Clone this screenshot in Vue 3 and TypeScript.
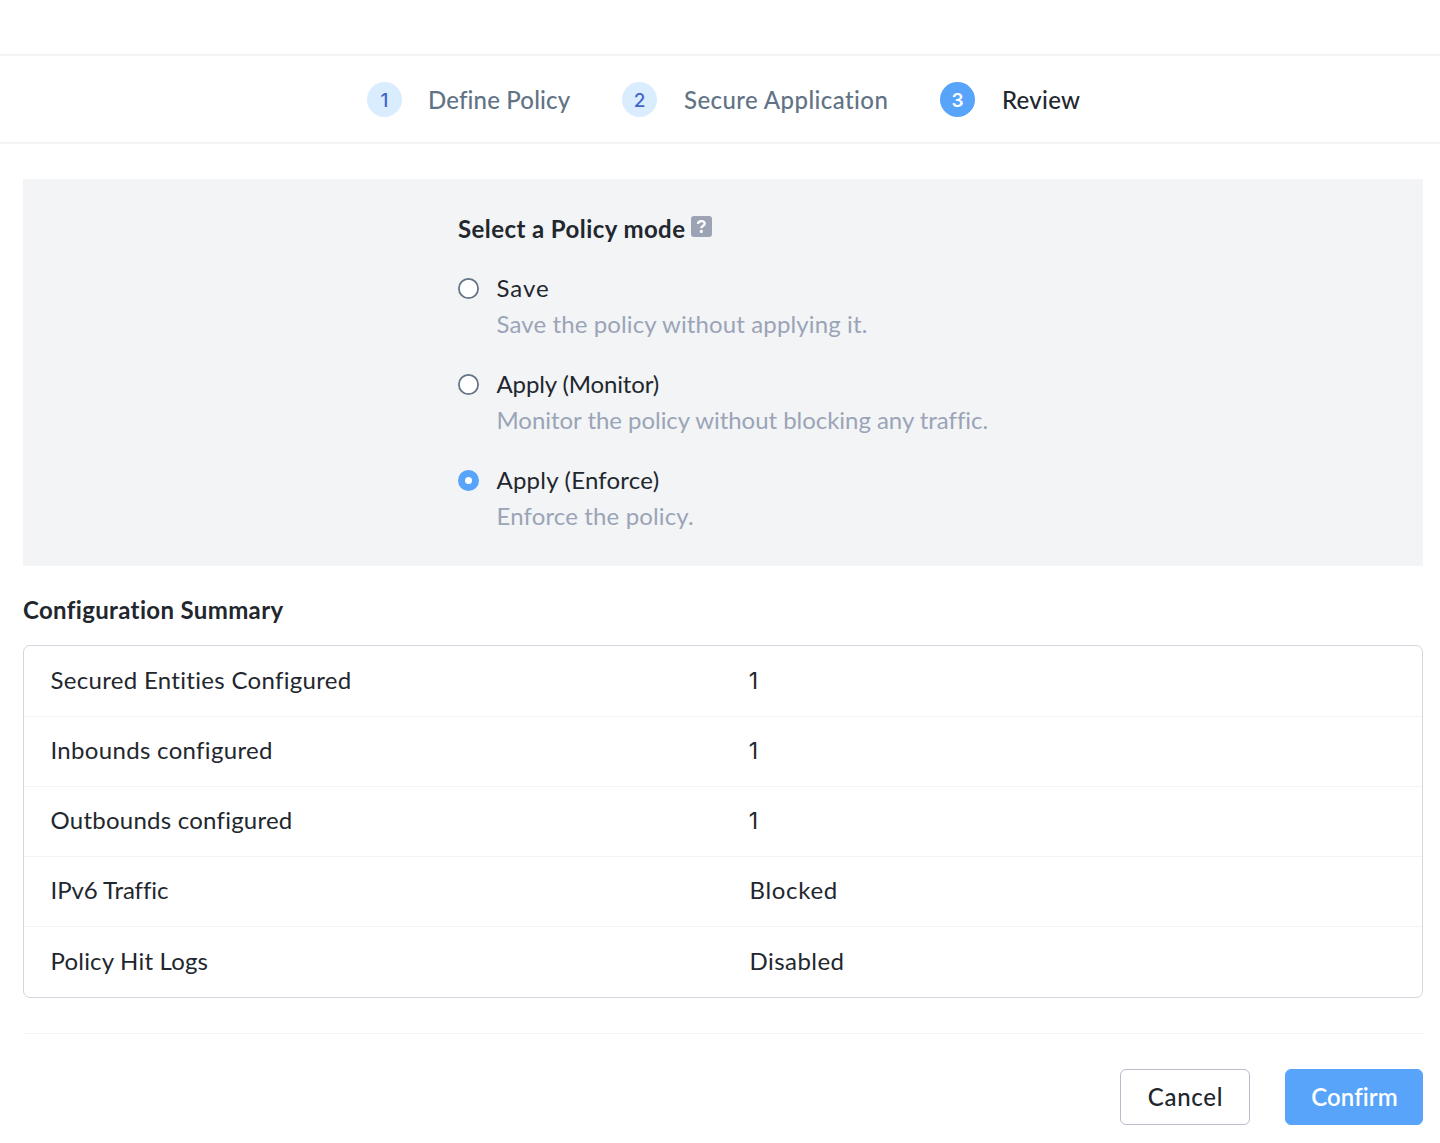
<script setup lang="ts">
import { ref } from 'vue'

interface Step { id: number; label: string; tracking: number }
interface Mode { id: string; label: string; hint: string; tracking: number; hintTracking: number }
interface SummaryRow { label: string; value: string; tracking: number; valueTracking: number }

const current = 3
const steps: Step[] = [
  { id: 1, label: 'Define Policy', tracking: 0.16 },
  { id: 2, label: 'Secure Application', tracking: 0.42 },
  { id: 3, label: 'Review', tracking: 0.27 },
]

const selected = ref('enforce')
const modes: Mode[] = [
  { id: 'save', label: 'Save', hint: 'Save the policy without applying it.', tracking: 0.97, hintTracking: 0.12 },
  { id: 'monitor', label: 'Apply (Monitor)', hint: 'Monitor the policy without blocking any traffic.', tracking: -0.13, hintTracking: -0.04 },
  { id: 'enforce', label: 'Apply (Enforce)', hint: 'Enforce the policy.', tracking: 0.22, hintTracking: 0.14 },
]

const summary: SummaryRow[] = [
  { label: 'Secured Entities Configured', value: '1', tracking: 0.31, valueTracking: 0 },
  { label: 'Inbounds configured', value: '1', tracking: 0.32, valueTracking: 0 },
  { label: 'Outbounds configured', value: '1', tracking: 0.24, valueTracking: 0 },
  { label: 'IPv6 Traffic', value: 'Blocked', tracking: -0.08, valueTracking: 0.68 },
  { label: 'Policy Hit Logs', value: 'Disabled', tracking: 0.2, valueTracking: 0.46 },
]

const isNumeric = (value: string) => /^\d+$/.test(value)
</script>

<template>
  <div class="page">
    <div class="topbar"></div>
    <nav class="steps">
      <div v-for="s in steps" :key="s.id" class="step" :class="{ active: s.id === current }">
        <span class="num">{{ s.id }}</span>
        <span class="label" :style="{ letterSpacing: s.tracking + 'px' }">{{ s.label }}</span>
      </div>
    </nav>

    <main class="content">
      <section class="panel">
        <div class="panel-head">
          <h2 class="title mode-title">Select a Policy mode</h2>
          <svg class="help" width="21" height="21" viewBox="0 0 21 21">
            <rect width="21" height="21" rx="3" fill="#9ca3b5" />
            <path d="M6.9 7.9C7.2 6.1 8.5 5.2 10.3 5.2c2 0 3.4.9 3.4 2.4 0 1.2-.8 1.8-1.8 2.3-1.1.6-1.6 1-1.6 2.3" fill="none" stroke="#fff" stroke-width="2.3" />
            <circle cx="10.3" cy="15.4" r="1.6" fill="#fff" />
          </svg>
        </div>
        <div v-for="m in modes" :key="m.id" class="mode" @click="selected = m.id">
          <span class="radio" :class="{ checked: m.id === selected }"></span>
          <div class="mode-text">
            <div :style="{ letterSpacing: m.tracking + 'px' }">{{ m.label }}</div>
            <div class="mode-hint" :style="{ letterSpacing: m.hintTracking + 'px' }">{{ m.hint }}</div>
          </div>
        </div>
      </section>

      <h2 class="title summary-title">Configuration Summary</h2>
      <div class="table">
        <div v-for="r in summary" :key="r.label" class="row">
          <div :style="{ letterSpacing: r.tracking + 'px' }">{{ r.label }}</div>
          <div :class="{ numeric: isNumeric(r.value) }" :style="{ letterSpacing: r.valueTracking + 'px' }">{{ r.value }}</div>
        </div>
      </div>

      <footer class="footer">
        <button class="btn cancel">Cancel</button>
        <button class="btn confirm">Confirm</button>
      </footer>
    </main>
  </div>
</template>

<style>
body {
  margin: 0;
  background: #fff;
}
</style>

<style scoped>
.page {
  height: 1143px;
  overflow: hidden;
  font-family: Lato, "Open Sans", sans-serif;
  font-size: 24px;
  line-height: 36px;
  font-variant-ligatures: none;
  color: #22272e;
  white-space: nowrap;
}
.topbar {
  height: 54px;
  border-bottom: 2px solid #f2f4f6;
}
.steps {
  display: grid;
  grid-template-columns: 255px 318px auto;
  height: 86px;
  padding-left: 367px;
  border-bottom: 2px solid #f2f4f6;
}
.step {
  display: flex;
  padding-top: 26px;
  font-weight: 500;
  color: #627386;
}
.num {
  width: 35px;
  height: 35px;
  margin-right: 26px;
  border-radius: 50%;
  background: #d9edff;
  color: #4264c8;
  font-family: Inter, sans-serif;
  font-size: 19px;
  font-weight: 500;
  line-height: 38px;
  text-align: center;
}
.label {
  line-height: 35px;
}
.step + .step .label {
  margin-left: 1px;
}
.active {
  color: #22272e;
}
.active .num {
  background: #57a4fa;
  color: #fff;
  font-weight: 600;
}
.content {
  padding: 35px 17px 0 23px;
}
.panel {
  box-sizing: border-box;
  height: 387px;
  padding: 31px 0 0 435px;
  background: #f2f4f6;
}
.panel-head {
  display: flex;
  margin-bottom: 22px;
}
.title {
  margin: 0;
  font-size: 24px;
  font-weight: 700;
  line-height: 38px;
}
.mode-title {
  width: 233px;
  letter-spacing: 0.42px;
}
.help {
  margin-top: 6px;
}
.mode {
  display: flex;
  margin-bottom: 24px;
}
.radio {
  box-sizing: border-box;
  width: 21px;
  height: 21px;
  margin: 8px 18px 0 0;
  border-radius: 50%;
  background: #fff;
  box-shadow: inset 0 0 0 1.8px #627386;
}
.radio.checked {
  border: 7px solid #57a4fa;
  box-shadow: none;
}
.mode-text {
  margin-left: -0.5px;
}
.mode-hint {
  color: #9ba4b7;
}
.summary-title {
  margin: 25px 0 16px;
  letter-spacing: 0.35px;
}
.table {
  border: 1px solid #d3d6de;
  border-radius: 7px;
}
.row {
  box-sizing: border-box;
  display: grid;
  grid-template-columns: 699px 1fr;
  height: 70px;
  padding: 15px 0 0 26.5px;
  border-bottom: 1px solid #f2f4f6;
}
.row:first-child {
  height: 71px;
  padding-top: 16px;
}
.row:last-child {
  padding-top: 16px;
  border-bottom: 0;
}
.numeric {
  margin-left: -0.7px;
  font-family: Inter, sans-serif;
  font-size: 23px;
  line-height: 38px;
}
.footer {
  display: flex;
  justify-content: flex-end;
  gap: 35px;
  margin-top: 35px;
  padding-top: 35px;
  border-top: 1px solid #f2f4f6;
}
.btn {
  box-sizing: border-box;
  height: 56px;
  padding: 0 0 0 1px;
  border: 1px solid #b8bccb;
  border-radius: 6px;
  background: #fff;
  color: #22272e;
  font-family: inherit;
  font-size: 24px;
  font-weight: 500;
  font-variant-ligatures: none;
  line-height: 52px;
}
.cancel {
  width: 130px;
  letter-spacing: 0.72px;
}
.confirm {
  width: 138px;
  border-color: #57a4fa;
  background: #57a4fa;
  color: #fff;
  font-weight: 600;
  letter-spacing: 0.1px;
}
</style>
